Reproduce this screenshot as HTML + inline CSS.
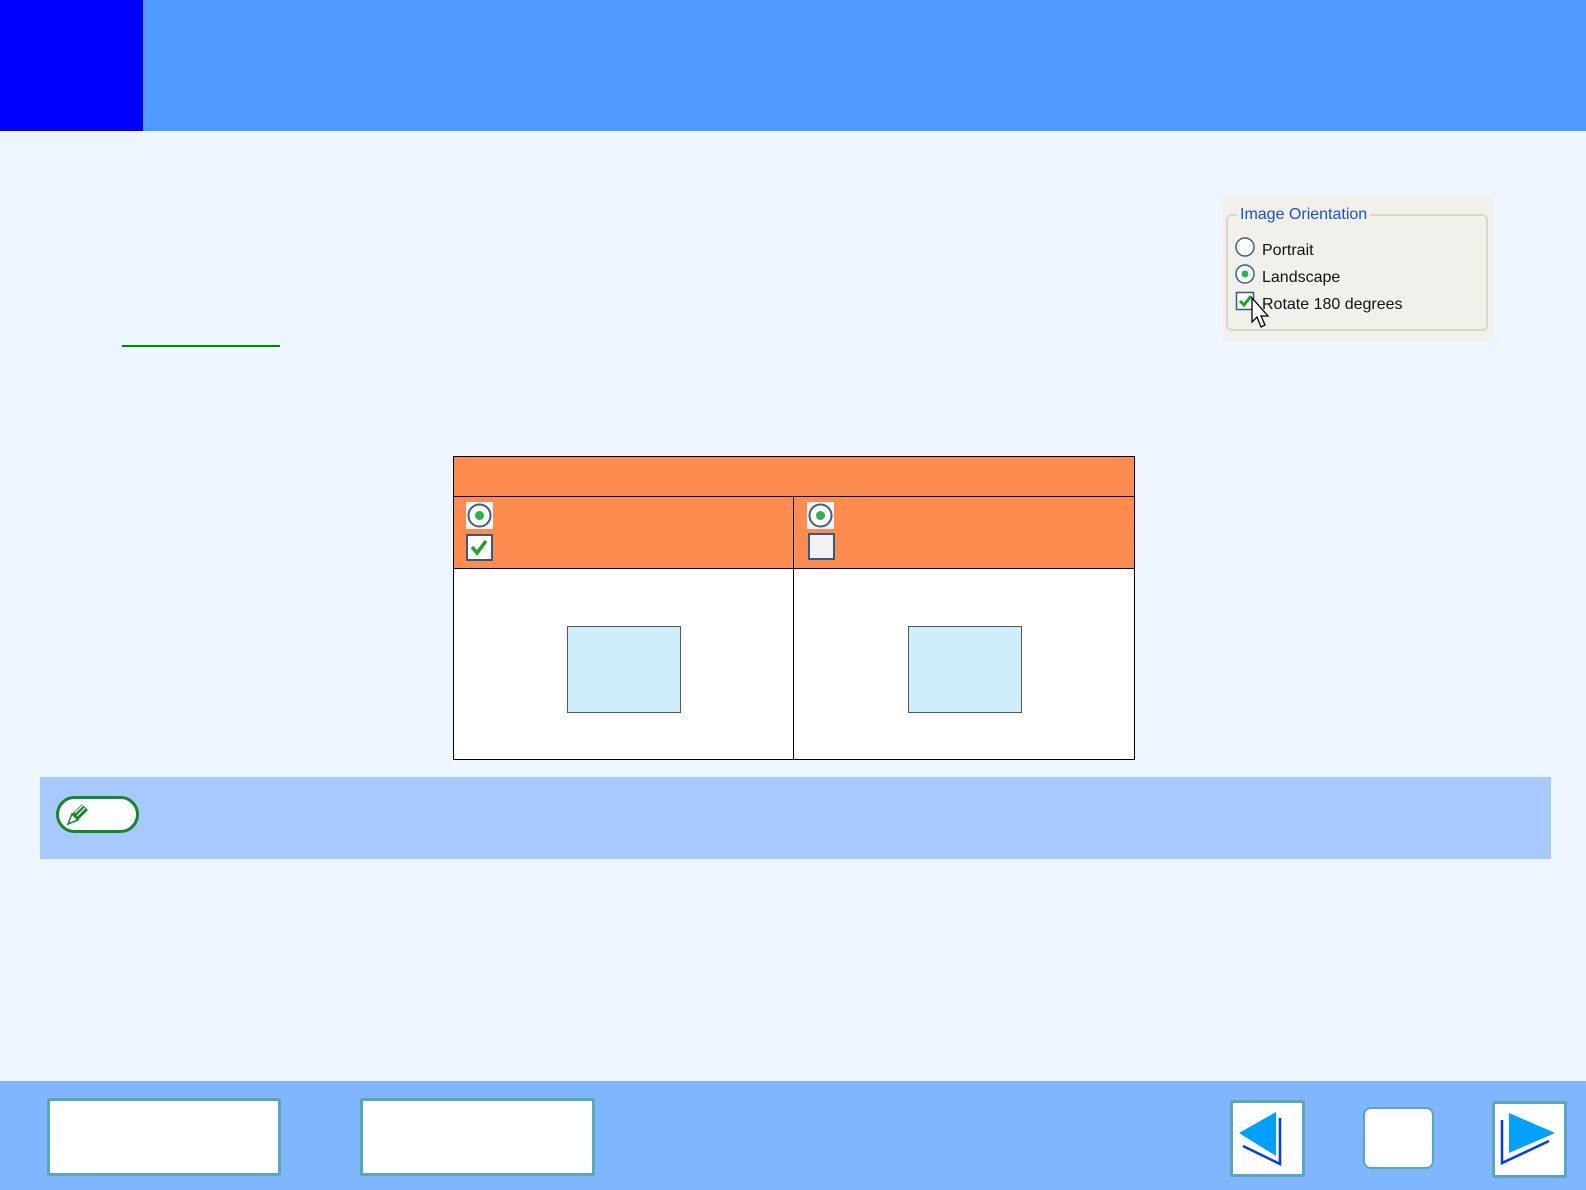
<!DOCTYPE html>
<html><head><meta charset="utf-8"><style>
*{margin:0;padding:0;box-sizing:border-box}
body{width:1586px;height:1190px;background:#edf5ff;position:relative;overflow:hidden;font-family:"Liberation Sans",sans-serif}
.abs{position:absolute}
</style></head><body>
<div class="abs" style="left:0;top:0;width:1586px;height:131px;background:#4f9aff"></div>
<div class="abs" style="left:0;top:0;width:143px;height:131px;background:#0000ff"></div>

<div class="abs" style="left:1223px;top:196px;width:270px;height:145px;background:#f1f0ea"></div>
<div class="abs" style="left:1226px;top:214px;width:262px;height:117px;border:2px solid #d8d7cc;border-radius:6px"></div>
<div class="abs" style="left:1237px;top:206px;background:#f1f0ea;padding:0 3px;color:#1a4fe0;font-size:16px">Image Orientation</div>
<svg class="abs" style="left:1235px;top:236px" width="22" height="80">
<circle cx="10" cy="11" r="9" fill="#fff" stroke="#3a5f8c" stroke-width="1.5"/>
<circle cx="10" cy="38" r="9" fill="#fff" stroke="#3a5f8c" stroke-width="1.5"/>
<circle cx="10" cy="38" r="3.5" fill="#2bb24a"/>
<rect x="1.5" y="56.5" width="17" height="17" fill="#fff" stroke="#2b5d8f" stroke-width="1.5"/>
<path d="M5 65 L9 69 L16 60" stroke="#21a121" stroke-width="3" fill="none"/>
</svg>
<svg class="abs" style="left:1250px;top:296px" width="22" height="40"><path d="M2 2 L2 26 L7 21 L11 31 L15 29 L11 20 L18 20 Z" fill="#fff" stroke="#000" stroke-width="1.3"/></svg>
<div class="abs" style="left:1262px;top:237px;font-size:16px;color:#111;line-height:27px">Portrait<br>Landscape<br>Rotate 180 degrees</div>

<div class="abs" style="left:122px;top:345px;width:158px;height:2px;background:#008a00"></div>

<div class="abs" style="left:453px;top:456px;width:682px;height:304px;border:1px solid #000;background:#fff"></div>
<div class="abs" style="left:454px;top:457px;width:680px;height:40px;background:#ff8c4f;border-bottom:1px solid #000"></div>
<div class="abs" style="left:454px;top:497px;width:680px;height:72px;background:#ff8c4f;border-bottom:1px solid #000"></div>
<div class="abs" style="left:793px;top:497px;width:1px;height:263px;background:#000"></div>
<svg class="abs" style="left:466px;top:502px" width="30" height="60">
<rect x="0" y="0" width="27" height="27" fill="#f4f4f4"/><circle cx="13.5" cy="13.5" r="11" fill="#fff" stroke="#3a5f8c" stroke-width="2"/><circle cx="13.5" cy="13.5" r="4.5" fill="#2bb24a"/>
<rect x="1" y="33" width="25" height="25" fill="#fff" stroke="#2b5d8f" stroke-width="2"/><path d="M6 45 L11 51 L20 39" stroke="#21a121" stroke-width="3.5" fill="none"/>
</svg>
<svg class="abs" style="left:807px;top:502px" width="30" height="60">
<rect x="0" y="0" width="27" height="27" fill="#f4f4f4"/><circle cx="13.5" cy="13.5" r="11" fill="#fff" stroke="#3a5f8c" stroke-width="2"/><circle cx="13.5" cy="13.5" r="4.5" fill="#2bb24a"/>
<rect x="2" y="32" width="25" height="25" fill="#f2f2f2" stroke="#2b5d8f" stroke-width="2"/>
</svg>
<div class="abs" style="left:567px;top:626px;width:114px;height:87px;background:#cdeefa;border:1px solid #555"></div>
<div class="abs" style="left:908px;top:626px;width:114px;height:87px;background:#cdeefa;border:1px solid #555"></div>

<div class="abs" style="left:40px;top:777px;width:1511px;height:82px;background:#a6caff"></div>
<div class="abs" style="left:56px;top:796px;width:83px;height:37px;background:#fff;border:3px solid #108a2a;border-radius:19px"></div>
<svg class="abs" style="left:64px;top:800px" width="30" height="30"><path d="M4 24 L8 14 L18 4 L24 10 L14 20 Z" fill="#108a2a"/><path d="M4 24 L8 14 L14 20 Z" fill="#fff" stroke="#108a2a" stroke-width="1.5"/><path d="M11 13 L19 5 M13 16 L21 8" stroke="#fff" stroke-width="1.3"/></svg>

<div class="abs" style="left:0;top:1081px;width:1586px;height:109px;background:#80b6ff"></div>
<div class="abs" style="left:47px;top:1098px;width:234px;height:78px;background:#fff;border:3px solid #5ba7b8;border-radius:2px"></div>
<div class="abs" style="left:360px;top:1098px;width:235px;height:78px;background:#fff;border:3px solid #5ba7b8;border-radius:2px"></div>
<div class="abs" style="left:1230px;top:1100px;width:75px;height:77px;background:#fff;border:3px solid #5ba7b8;border-radius:2px"></div>
<svg class="abs" style="left:1230px;top:1100px" width="75" height="77"><path d="M9 33 L46 12 L46 56 Z" fill="#00a0ff"/><path d="M50 18 L50 64 L13 46" stroke="#0038ff" stroke-width="2.5" fill="none"/></svg>
<div class="abs" style="left:1363px;top:1107px;width:71px;height:62px;background:#fff;border:2px solid #5ba7b8;border-radius:8px"></div>
<div class="abs" style="left:1492px;top:1101px;width:75px;height:77px;background:#fff;border:3px solid #5ba7b8;border-radius:2px"></div>
<svg class="abs" style="left:1492px;top:1101px" width="75" height="77"><path d="M17 12 L63 32 L17 52 Z" fill="#00a0ff"/><path d="M10 19 L10 62 L57 40" stroke="#0038ff" stroke-width="2.5" fill="none"/></svg>
</body></html>
